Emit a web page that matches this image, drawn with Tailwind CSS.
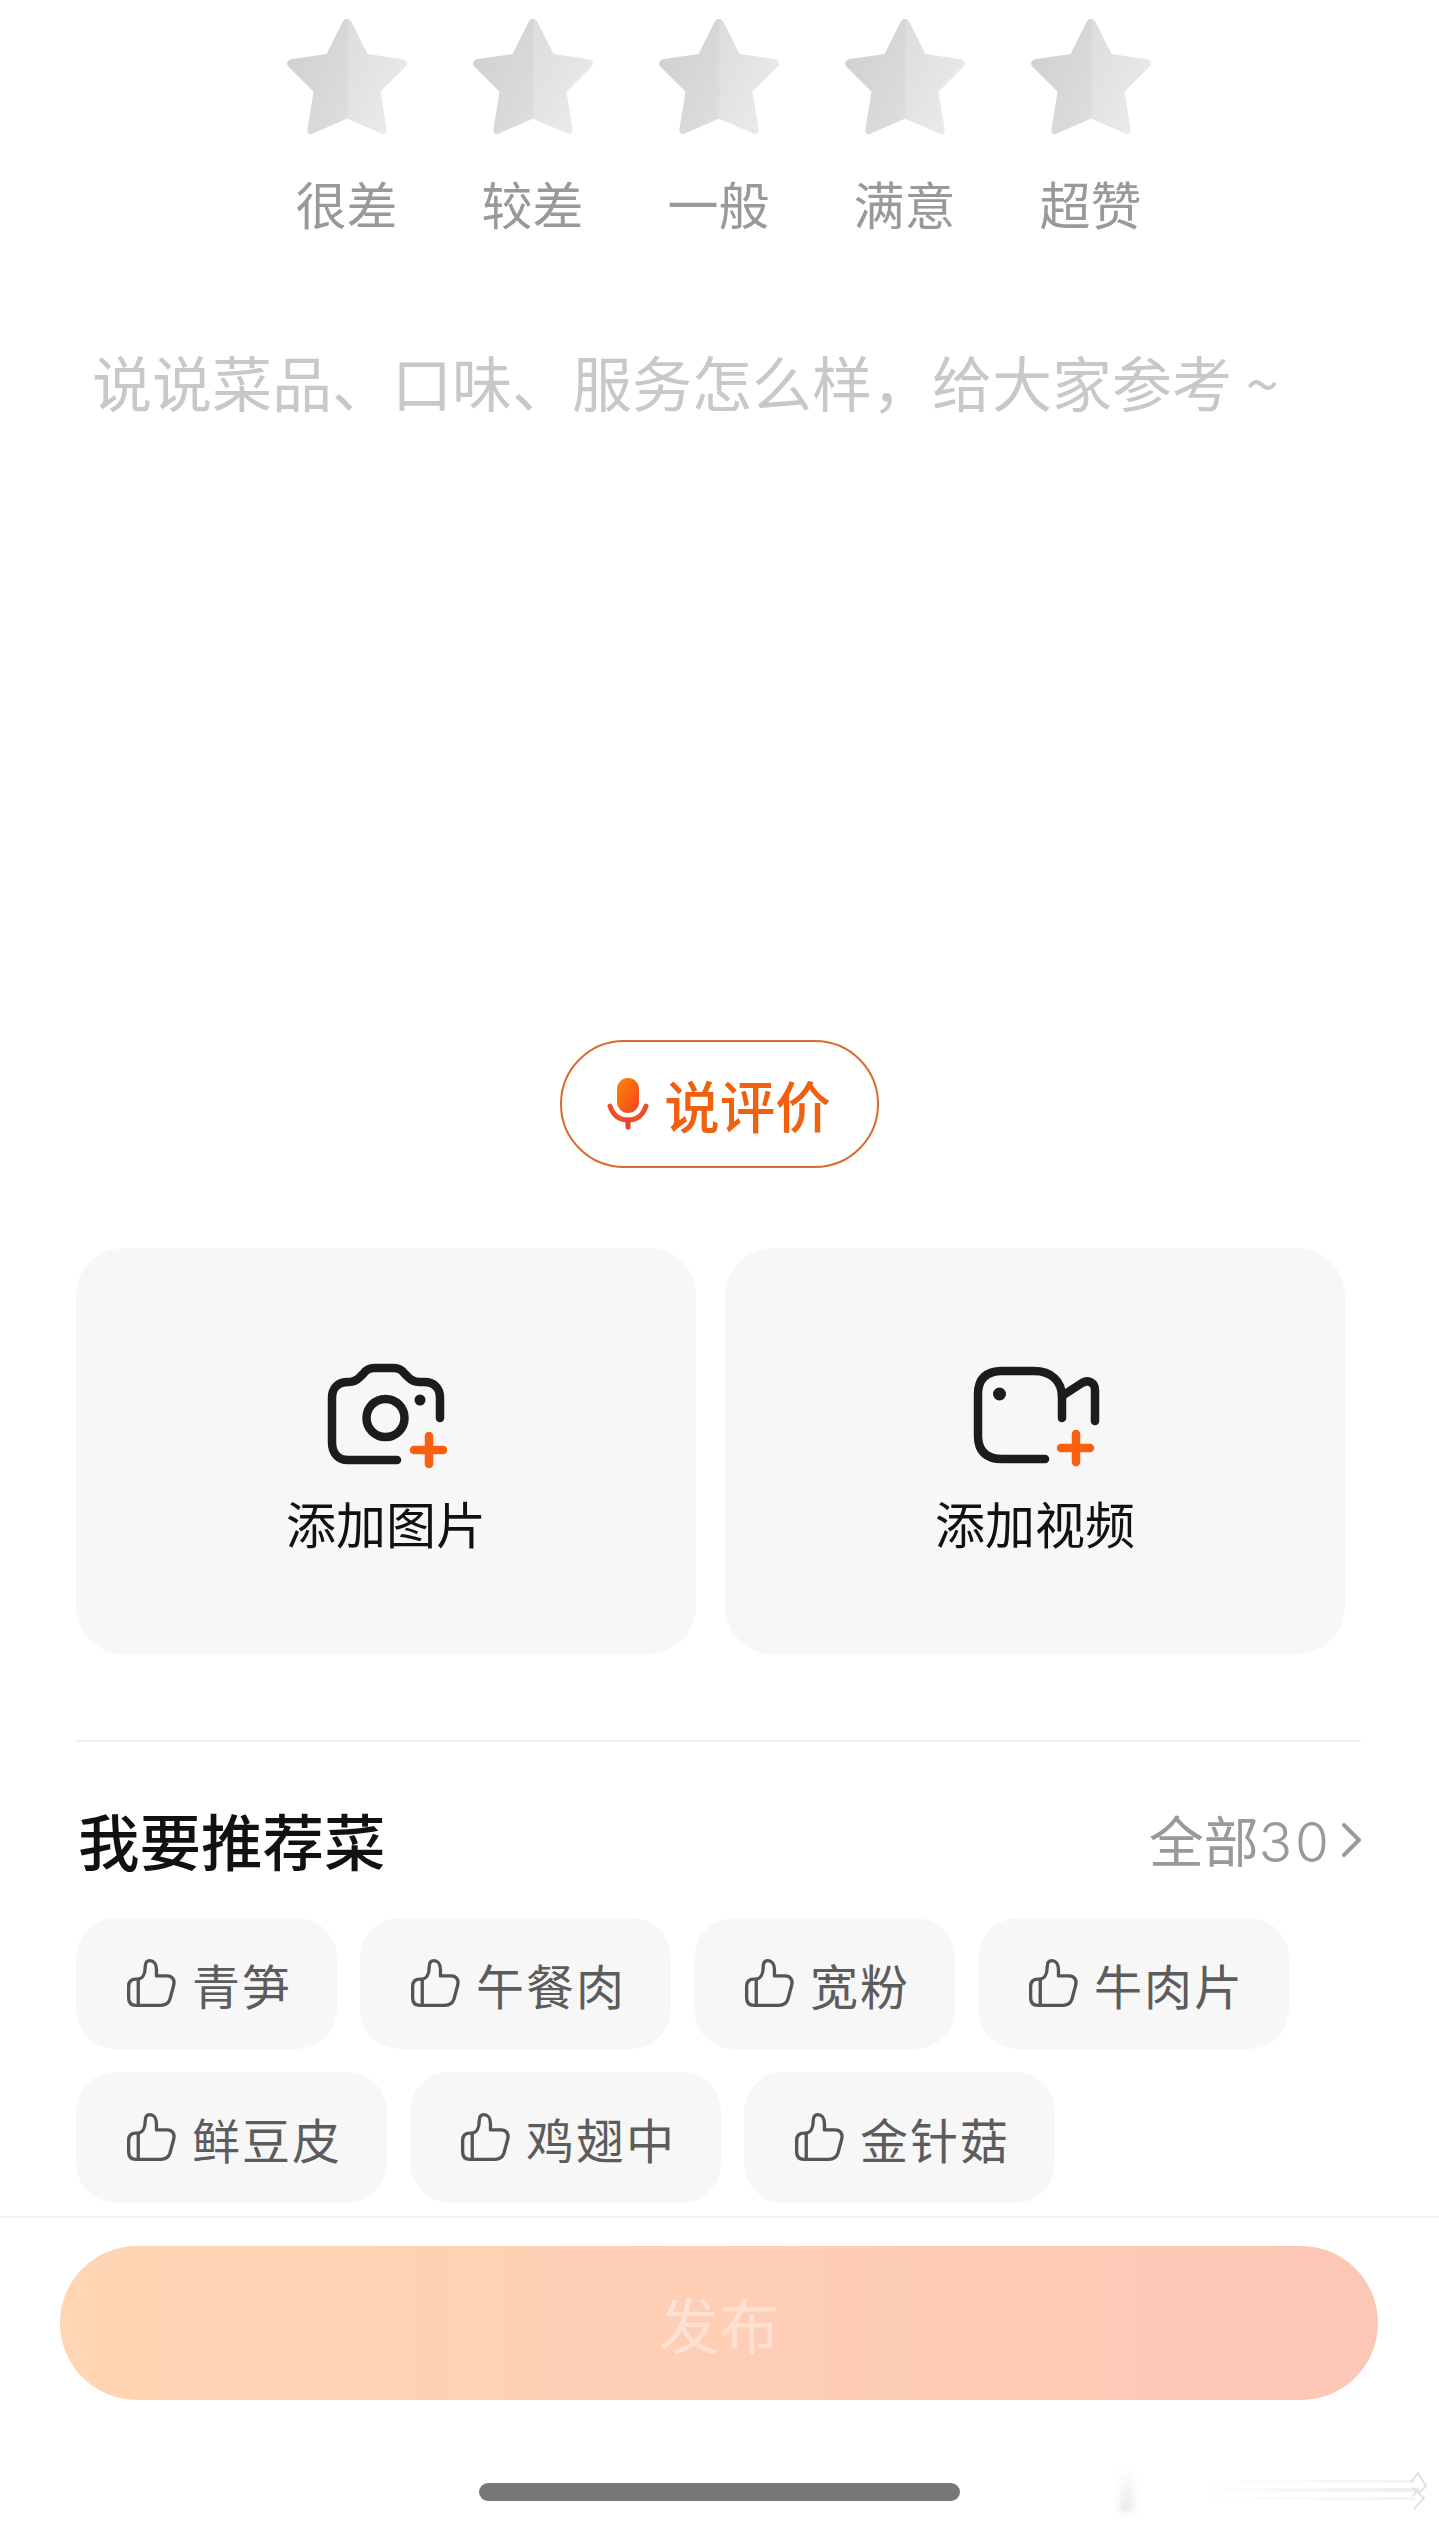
<!DOCTYPE html>
<html lang="zh-CN">
<head>
<meta charset="utf-8">
<script src="https://cdn.jsdelivr.net/npm/@tailwindcss/browser@4"></script>
<title>评价</title>
</head>
<body class="bg-white">
<svg width="0" height="0" class="absolute">
  <defs>
    <linearGradient id="sl" x1="0" y1="0" x2="1" y2="1"><stop offset="0" stop-color="#cecece"/><stop offset="1" stop-color="#dedede"/></linearGradient>
    <linearGradient id="sr" x1="0" y1="0" x2="1" y2="1"><stop offset="0" stop-color="#dcdcdc"/><stop offset="1" stop-color="#ededed"/></linearGradient>
    <linearGradient id="mic" x1="0" y1="0" x2="1" y2="1"><stop offset="0" stop-color="#fb8a05"/><stop offset="1" stop-color="#f2411e"/></linearGradient>
    <symbol id="star" viewBox="3.5 3.5 113 109.5">
      <path d="M60 4C62 4 63 5 64 7L79 37L113 42C116 43 117 46 115 48L91 72L97 108C97 111 95 113 92 111L60 97Z" fill="url(#sr)" stroke="url(#sr)" stroke-width="1"/>
      <path d="M60 4C58 4 57 5 56 7L41 37L7 42C4 43 3 46 5 48L29 72L23 108C23 111 25 113 28 111L60 97Z" fill="url(#sl)" stroke="url(#sl)" stroke-width="1"/>
    </symbol>
    <symbol id="thumb" viewBox="195 165 160 160">
      <path d="M235 311H303C318 311 327 304 331 291L342 250C346 234 338 222 322 222H290V203C290 186 281 176 270 176C261 176 256 183 256 195C256 215 249 232 232 232H228C213 232 206 240 206 254V289C206 303 213 311 228 311H235V232" fill="none" stroke="#555" stroke-width="10" stroke-linecap="round" stroke-linejoin="round"/>
    </symbol>
  </defs>
</svg>
<div class="relative w-[1439px] h-[2525px] overflow-hidden flex flex-col bg-white font-['Noto_Sans_CJK_SC','Noto_Sans',sans-serif]">

  <div class="flex justify-center pt-[19px] pr-[2px]">
    <div class="w-[186px] flex flex-col items-center"><svg class="w-[120px] h-[116px]"><use href="#star"/></svg><span class="mt-[38px] text-[51px] leading-[60px] text-[#999]">很差</span></div>
    <div class="w-[186px] flex flex-col items-center"><svg class="w-[120px] h-[116px]"><use href="#star"/></svg><span class="mt-[38px] text-[51px] leading-[60px] text-[#999]">较差</span></div>
    <div class="w-[186px] flex flex-col items-center"><svg class="w-[120px] h-[116px]"><use href="#star"/></svg><span class="mt-[38px] text-[51px] leading-[60px] text-[#999]">一般</span></div>
    <div class="w-[186px] flex flex-col items-center"><svg class="w-[120px] h-[116px]"><use href="#star"/></svg><span class="mt-[38px] text-[51px] leading-[60px] text-[#999]">满意</span></div>
    <div class="w-[186px] flex flex-col items-center"><svg class="w-[120px] h-[116px]"><use href="#star"/></svg><span class="mt-[38px] text-[51px] leading-[60px] text-[#999]">超赞</span></div>
  </div>

  <p class="mt-[108px] ml-[92px] text-[60px] leading-[80px] text-[#c8c8c8] whitespace-nowrap">说说菜品、口味、服务怎么样，给大家参考 ~</p>

  <div class="mt-[619px] self-center w-[319px] h-[128px] ml-[-1px] rounded-full border-[2.5px] border-[#dc6a2e] flex items-center justify-center gap-[15px]">
    <svg class="w-[42px] h-[52px]" viewBox="0 0 42 52">
      <rect x="10" y="0" width="22" height="35" rx="11" fill="url(#mic)"/>
      <path d="M3 28C6 37 12 42 21 42C30 42 36 37 39 28" fill="none" stroke="#ee4f24" stroke-width="5" stroke-linecap="round"/>
      <path d="M21 42V49" fill="none" stroke="#ee3f2c" stroke-width="5" stroke-linecap="round"/>
    </svg>
    <span class="text-[55.5px] leading-[60px] font-medium text-[#f0600f]">说评价</span>
  </div>

  <div class="mt-[80px] ml-[76px] flex gap-[29px]">
    <div class="w-[620px] h-[406px] rounded-[48px] bg-[#f7f7f7] flex flex-col items-center pt-[114px]">
      <svg class="w-[122px] h-[108px] mr-[-4px]" viewBox="47 22 122 108" fill="none" stroke-linecap="round" stroke-linejoin="round">
        <path d="M160 78V58C160 48 154 42 144 42H139C134 42 131 40 128 37L124 33C121 29 118 28 114 28H94C90 28 87 29 84 33L80 37C77 40 74 42 69 42H68C58 42 52 48 52 58V102C52 113 58 120 68 120H117" stroke="#1c1c1c" stroke-width="8.5"/>
        <circle cx="105.5" cy="78" r="19" stroke="#1c1c1c" stroke-width="8.5"/>
        <circle cx="140" cy="60" r="5.5" fill="#1c1c1c"/>
        <path d="M149 96V124M134 110H163" stroke="#fa5f0f" stroke-width="8.5"/>
      </svg>
      <span class="mt-[22px] text-[50px] leading-[60px] text-[#111]">添加图片</span>
    </div>
    <div class="w-[620px] h-[406px] rounded-[48px] bg-[#f7f7f7] flex flex-col items-center pt-[114px]">
      <svg class="w-[128px] h-[108px] ml-[2px]" viewBox="44 22 128 108" fill="none" stroke-linecap="round" stroke-linejoin="round">
        <path d="M117 119H74C58 119 50 111 50 96V54C50 39 58 31 74 31H106C123 31 134 41 134 57V78" stroke="#1c1c1c" stroke-width="8.5"/>
        <path d="M134 56L154 43C161 39 167 43 167 50V81" stroke="#1c1c1c" stroke-width="8.5"/>
        <circle cx="71.5" cy="54" r="6.5" fill="#1c1c1c"/>
        <path d="M148 94V122M133 108H162" stroke="#fa5f0f" stroke-width="8.5"/>
      </svg>
      <span class="mt-[22px] text-[50px] leading-[60px] text-[#111]">添加视频</span>
    </div>
  </div>

  <div class="mt-[86px] ml-[76px] w-[1285px] h-[2px] bg-[#f0f0f0]"></div>

  <div class="mt-[63px] ml-[78px] w-[1284px] h-[70px] flex items-center justify-between">
    <span class="text-[61.5px] leading-[70px] font-medium text-[#111]">我要推荐菜</span>
    <span class="flex items-center gap-[10px] text-[55px] leading-[70px] text-[#999]"><span>全部<span class="font-['Inter','Noto_Sans',sans-serif] font-light tracking-[3px]">30</span></span>
      <svg class="w-[20px] h-[36px]" viewBox="0 0 20 36" fill="none"><path d="M2 3L17 18L2 33" stroke="#999" stroke-width="4" stroke-linecap="round" stroke-linejoin="round"/></svg>
    </span>
  </div>

  <div class="mt-[43px] ml-[76px] w-[1285px] flex flex-wrap gap-x-[23px] gap-y-[23px]">
    <div class="h-[131px] rounded-[40px] bg-[#f7f7f7] flex items-center pl-[49px] pr-[45px] gap-[14px]"><svg class="w-[53px] h-[53px]"><use href="#thumb"/></svg><span class="text-[48px] tracking-[2px] leading-[60px] text-[#5c5c5c]">青笋</span></div>
    <div class="h-[131px] rounded-[40px] bg-[#f7f7f7] flex items-center pl-[49px] pr-[45px] gap-[14px]"><svg class="w-[53px] h-[53px]"><use href="#thumb"/></svg><span class="text-[48px] tracking-[2px] leading-[60px] text-[#5c5c5c]">午餐肉</span></div>
    <div class="h-[131px] rounded-[40px] bg-[#f7f7f7] flex items-center pl-[49px] pr-[45px] gap-[14px]"><svg class="w-[53px] h-[53px]"><use href="#thumb"/></svg><span class="text-[48px] tracking-[2px] leading-[60px] text-[#5c5c5c]">宽粉</span></div>
    <div class="h-[131px] rounded-[40px] bg-[#f7f7f7] flex items-center pl-[49px] pr-[45px] gap-[14px]"><svg class="w-[53px] h-[53px]"><use href="#thumb"/></svg><span class="text-[48px] tracking-[2px] leading-[60px] text-[#5c5c5c]">牛肉片</span></div>
    <div class="h-[131px] rounded-[40px] bg-[#f7f7f7] flex items-center pl-[49px] pr-[45px] gap-[14px]"><svg class="w-[53px] h-[53px]"><use href="#thumb"/></svg><span class="text-[48px] tracking-[2px] leading-[60px] text-[#5c5c5c]">鲜豆皮</span></div>
    <div class="h-[131px] rounded-[40px] bg-[#f7f7f7] flex items-center pl-[49px] pr-[45px] gap-[14px]"><svg class="w-[53px] h-[53px]"><use href="#thumb"/></svg><span class="text-[48px] tracking-[2px] leading-[60px] text-[#5c5c5c]">鸡翅中</span></div>
    <div class="h-[131px] rounded-[40px] bg-[#f7f7f7] flex items-center pl-[49px] pr-[45px] gap-[14px]"><svg class="w-[53px] h-[53px]"><use href="#thumb"/></svg><span class="text-[48px] tracking-[2px] leading-[60px] text-[#5c5c5c]">金针菇</span></div>
  </div>

  <div class="mt-[13px] h-[2px] bg-[#f3f3f3]"></div>

  <div class="mt-[28px] ml-[60px] w-[1318px] h-[154px] rounded-full bg-gradient-to-r from-[#ffd5b3] to-[#fdc7b7] flex items-center justify-center">
    <span class="text-[60px] leading-[70px] text-white/40">发布</span>
  </div>

  <div class="mt-[83px] ml-[479px] w-[481px] h-[18px] rounded-full bg-[#777]"></div>

  <div class="absolute left-[1120px] top-[2467px] w-[14px] h-[45px] bg-gradient-to-b from-transparent to-[#e8e8e8] blur-[3px]"></div>
  <div class="absolute left-[1200px] top-[2480px] w-[215px] h-[3px] bg-gradient-to-r from-transparent to-[#f3f3f3]"></div>
  <div class="absolute left-[1200px] top-[2488px] w-[218px] h-[4px] bg-gradient-to-r from-transparent to-[#eeeeee]"></div>
  <div class="absolute left-[1200px] top-[2497px] w-[215px] h-[3px] bg-gradient-to-r from-transparent to-[#f3f3f3]"></div>
  <svg class="absolute left-[1405px] top-[2468px] w-[30px] h-[44px]" viewBox="0 0 30 44" fill="none" stroke="#e2e2e2" stroke-width="2">
    <path d="M6 14L13 5L21 18L13 26M8 28L14 21M8 20L19 30L9 41"/>
  </svg>
</div>
</body>
</html>
